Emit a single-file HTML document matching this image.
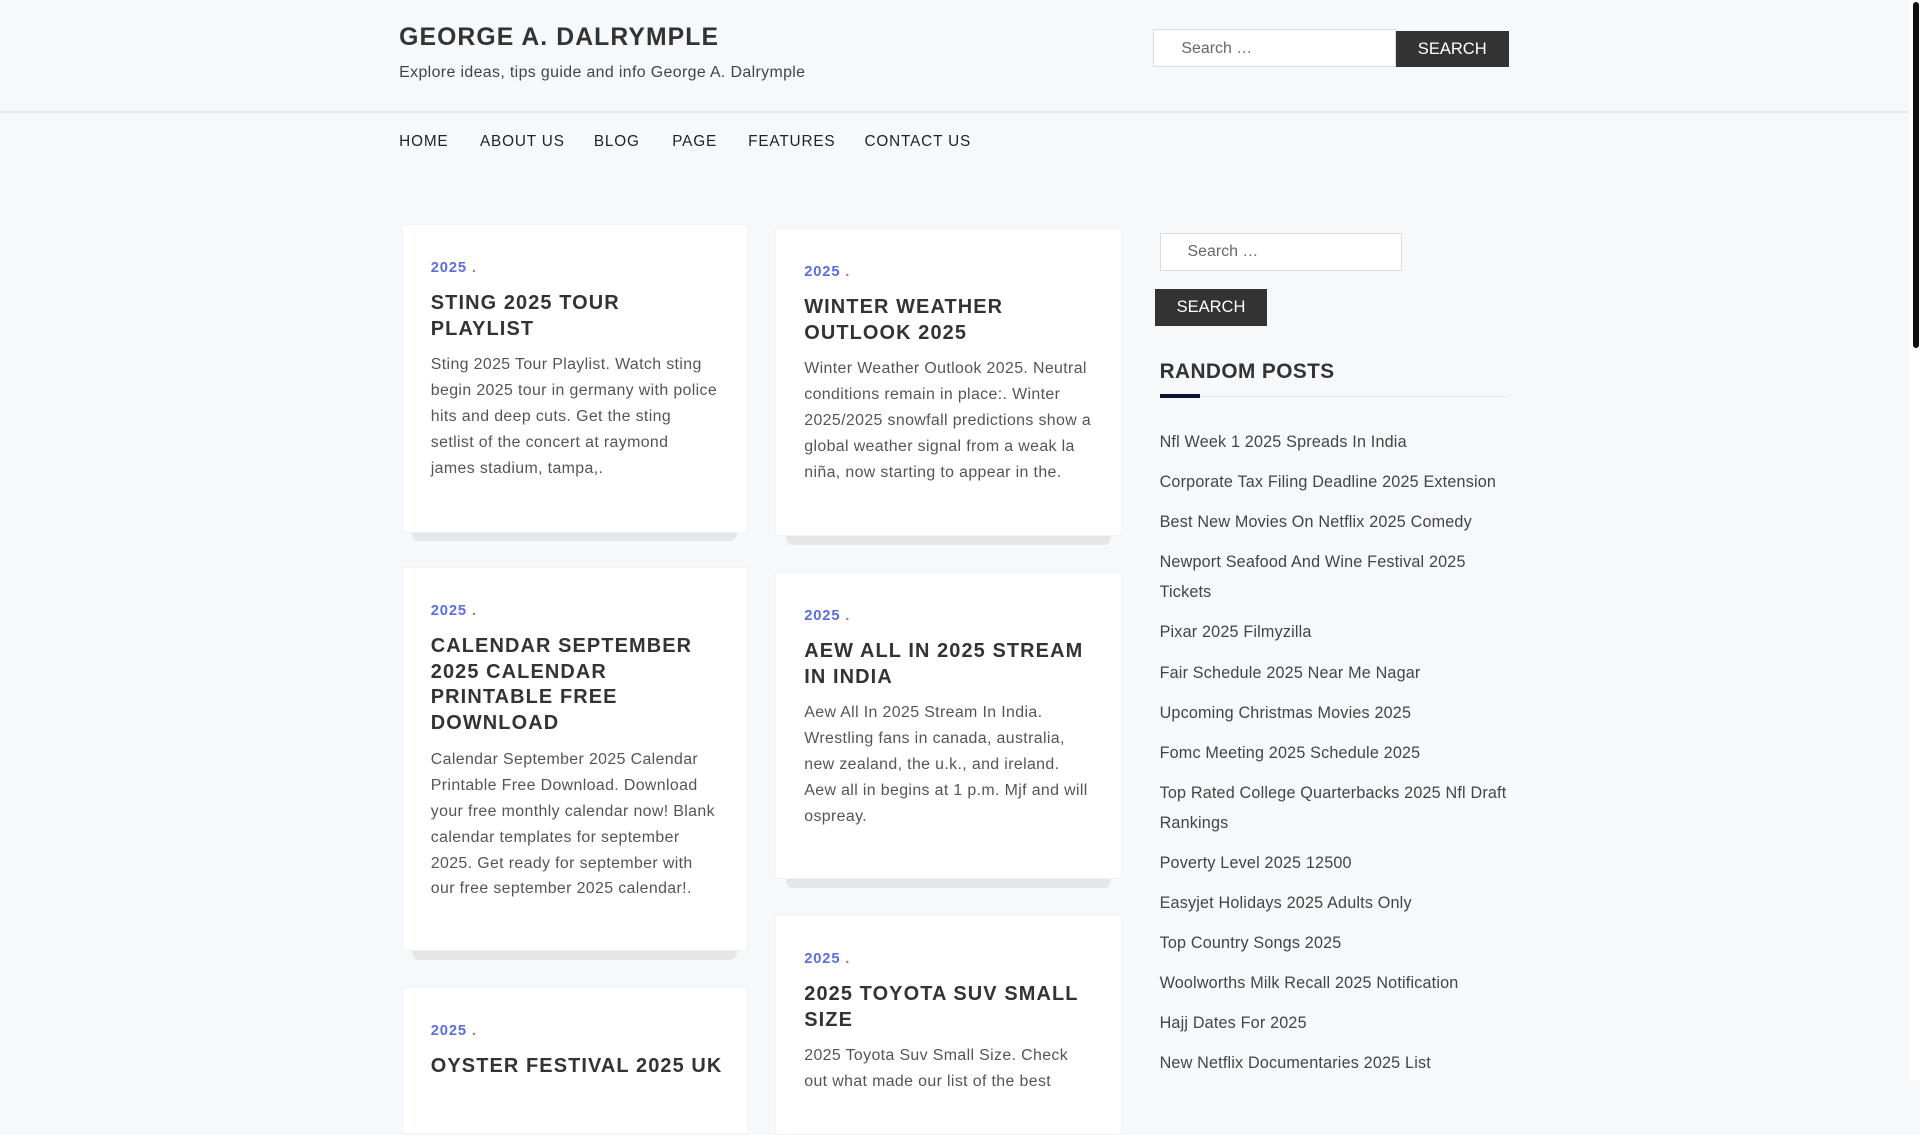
<!DOCTYPE html>
<html><head><meta charset="utf-8"><style>
html,body{margin:0;padding:0;}
body{width:1568px;height:882px;zoom:1.22449;background:#f7f8fa;font-family:"Liberation Sans",sans-serif;position:relative;overflow:hidden;color:#333;}
.a{position:absolute;white-space:nowrap;}
.title{left:326px;top:20px;font-size:20.2px;font-weight:bold;letter-spacing:.9px;color:#333;}
.tag{left:326px;top:52px;font-size:13px;letter-spacing:.3px;color:#444;}
.hs{left:942px;top:24px;width:198px;height:31px;background:#fff;border:1px solid #ddd;box-sizing:border-box;font-size:13px;color:#666;padding:8px 0 0 22px;}
.hb{left:1140px;top:25px;width:92px;height:30px;background:#333;color:#fff;font-size:13.5px;text-align:center;line-height:30px;}
.line{left:0;top:91px;width:1560px;height:1px;background:#e8eaed;}
.nav{top:109px;font-size:12.5px;letter-spacing:.7px;color:#222;}
.card{position:absolute;width:283px;background:#fff;border:1px solid #eef3fa;box-sizing:border-box;padding:26px 24px 0 23px;}
.card .sh{position:absolute;left:8px;right:8px;bottom:-8px;height:8px;background:#e4e6e7;border-radius:0 0 6px 6px;z-index:-1;}
.meta{font-size:12px;font-weight:bold;letter-spacing:.7px;color:#5b6ee1;line-height:18px;}
.meta span{color:#888;}
.ct{margin-top:10px;font-size:16.3px;font-weight:bold;letter-spacing:.9px;line-height:21px;text-transform:uppercase;color:#333;white-space:nowrap;}
.ex{margin-top:8px;font-size:13px;letter-spacing:.3px;line-height:21.2px;color:#555;}
.ss{left:947px;top:190px;width:198px;height:31px;background:#fff;border:1px solid #ddd;box-sizing:border-box;font-size:13px;color:#666;padding:8px 0 0 22px;}
.sb{left:943px;top:236px;width:92px;height:30px;background:#333;color:#fff;font-size:13.5px;text-align:center;line-height:30px;}
.rp{left:947px;top:294px;font-size:17px;font-weight:bold;letter-spacing:.35px;color:#333;}
.ul{left:947px;top:323px;width:285px;height:1px;background:#e5e7ea;}
.uk{left:947px;top:322px;width:33px;height:3px;background:#0b1330;}
.list{position:absolute;left:947px;top:349px;width:295px;font-size:13.2px;letter-spacing:.15px;color:#444;}
.list div{line-height:24.5px;margin-bottom:8.2px;}
.track{left:1560px;top:0;width:8px;height:882px;background:#fff;}
.thumb{left:1562px;top:2px;width:5px;height:282px;background:#111;border-radius:3px;}
</style></head><body>
<div class="a title">GEORGE A. DALRYMPLE</div>
<div class="a tag">Explore ideas, tips guide and info George A. Dalrymple</div>
<div class="a hs">Search …</div>
<div class="a hb">SEARCH</div>
<div class="a line"></div>
<div class="a nav" style="left:326px">HOME</div>
<div class="a nav" style="left:392px">ABOUT US</div>
<div class="a nav" style="left:485px">BLOG</div>
<div class="a nav" style="left:549px">PAGE</div>
<div class="a nav" style="left:611px">FEATURES</div>
<div class="a nav" style="left:706px">CONTACT US</div>

<div class="card" style="left:328px;top:183px;height:252px"><div class="sh"></div><div class="meta">2025 <span>.</span></div><div class="ct">Sting 2025 Tour<br>Playlist</div><div class="ex">Sting 2025 Tour Playlist. Watch sting<br>begin 2025 tour in germany with police<br>hits and deep cuts. Get the sting<br>setlist of the concert at raymond<br>james stadium, tampa,.</div></div>

<div class="card" style="left:633px;top:186px;height:252px"><div class="sh"></div><div class="meta">2025 <span>.</span></div><div class="ct">Winter Weather<br>Outlook 2025</div><div class="ex">Winter Weather Outlook 2025. Neutral<br>conditions remain in place:. Winter<br>2025/2025 snowfall predictions show a<br>global weather signal from a weak la<br>niña, now starting to appear in the.</div></div>

<div class="card" style="left:328px;top:463px;height:314px"><div class="sh"></div><div class="meta">2025 <span>.</span></div><div class="ct">Calendar September<br>2025 Calendar<br>Printable Free<br>Download</div><div class="ex">Calendar September 2025 Calendar<br>Printable Free Download. Download<br>your free monthly calendar now! Blank<br>calendar templates for september<br>2025. Get ready for september with<br>our free september 2025 calendar!.</div></div>

<div class="card" style="left:633px;top:467px;height:251px"><div class="sh"></div><div class="meta">2025 <span>.</span></div><div class="ct">Aew All In 2025 Stream<br>In India</div><div class="ex">Aew All In 2025 Stream In India.<br>Wrestling fans in canada, australia,<br>new zealand, the u.k., and ireland.<br>Aew all in begins at 1 p.m. Mjf and will<br>ospreay.</div></div>

<div class="card" style="left:328px;top:806px;height:120px"><div class="meta">2025 <span>.</span></div><div class="ct">Oyster Festival 2025 UK</div></div>

<div class="card" style="left:633px;top:747px;height:180px"><div class="meta">2025 <span>.</span></div><div class="ct">2025 Toyota Suv Small<br>Size</div><div class="ex">2025 Toyota Suv Small Size. Check<br>out what made our list of the best</div></div>

<div class="a ss">Search …</div>
<div class="a sb">SEARCH</div>
<div class="a rp">RANDOM POSTS</div>
<div class="a ul"></div><div class="a uk"></div>
<div class="list">
<div>Nfl Week 1 2025 Spreads In India</div>
<div>Corporate Tax Filing Deadline 2025 Extension</div>
<div>Best New Movies On Netflix 2025 Comedy</div>
<div>Newport Seafood And Wine Festival 2025<br>Tickets</div>
<div>Pixar 2025 Filmyzilla</div>
<div>Fair Schedule 2025 Near Me Nagar</div>
<div>Upcoming Christmas Movies 2025</div>
<div>Fomc Meeting 2025 Schedule 2025</div>
<div>Top Rated College Quarterbacks 2025 Nfl Draft<br>Rankings</div>
<div>Poverty Level 2025 12500</div>
<div>Easyjet Holidays 2025 Adults Only</div>
<div>Top Country Songs 2025</div>
<div>Woolworths Milk Recall 2025 Notification</div>
<div>Hajj Dates For 2025</div>
<div>New Netflix Documentaries 2025 List</div>
</div>
<div class="a track"></div><div class="a thumb"></div>
</body></html>
